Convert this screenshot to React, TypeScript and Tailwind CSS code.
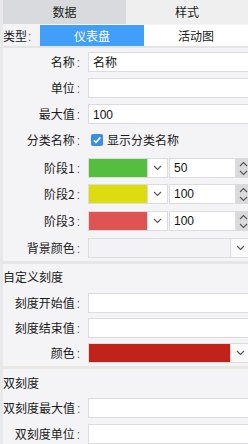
import React from "react";

const FONT = '"Noto Sans CJK SC", "Liberation Sans", sans-serif';
const NUM = '"Liberation Sans", "Noto Sans CJK SC", sans-serif';

function Chevron({ up = false }: { up?: boolean }) {
  return (
    <svg width="9" height="6" viewBox="0 0 9 6" className="block">
      <polyline
        points={up ? "1,5 4.5,1.5 8,5" : "1,1 4.5,4.5 8,1"}
        fill="none"
        stroke="#555"
        strokeWidth="1.1"
      />
    </svg>
  );
}

function Label({ text }: { text: string }) {
  return (
    <div className="w-[85px] shrink-0 text-right pr-[8px] whitespace-nowrap text-[12px] leading-[20px] text-[#1a1a1a]">
      {text}
      <span className="ml-[2px] text-[#5b4f7d]" style={{ fontFamily: NUM }}>:</span>
    </div>
  );
}

function TextRow({ label, value, mt }: { label: string; value?: string; mt: string }) {
  return (
    <div className={`flex h-[20px] ${mt}`}>
      <Label text={label} />
      <div className="w-[165px] shrink-0 h-[20px] bg-white border border-[#dcdcdf] pl-[4px] text-[12px] leading-[18px] text-[#111]">
        {value && <span style={{ fontFamily: value.match(/^\d/) ? NUM : FONT }}>{value}</span>}
      </div>
    </div>
  );
}

function StageRow({ label, color, value, mt }: { label: string; color: string; value: string; mt: string }) {
  return (
    <div className={`flex h-[20px] ${mt}`}>
      <Label text={label} />
      <div className="flex h-[20px] shrink-0 border border-[#dcdcdf] bg-white">
        <div className="w-[58px] h-full" style={{ backgroundColor: color }} />
        <div className="w-[20px] h-full bg-white border-l border-[#dcdcdf] flex items-center justify-center">
          <Chevron />
        </div>
      </div>
      <div className="ml-[1px] w-[67px] shrink-0 h-[20px] bg-white border border-[#dcdcdf] pl-[4px] text-[12px] leading-[18px] text-[#111]" style={{ fontFamily: NUM }}>
        {value}
      </div>
      <div className="w-[14px] shrink-0 h-[20px] bg-[#dadadc] flex flex-col items-center justify-center gap-[3px]">
        <Chevron up />
        <Chevron />
      </div>
    </div>
  );
}

function SelectRow({ label, fill, mt }: { label: string; fill?: string; mt: string }) {
  return (
    <div className={`flex h-[20px] ${mt}`}>
      <Label text={label} />
      <div className="flex h-[20px] w-[162px] shrink-0 border border-[#dcdcdf] bg-[#f3f3f5]">
        <div className="w-[141px] h-full" style={{ backgroundColor: fill ?? "#f3f3f5" }} />
        <div className="flex-1 h-full bg-[#fafafa] border-l border-[#dcdcdf] flex items-center justify-center">
          <Chevron />
        </div>
      </div>
    </div>
  );
}

export default function App() {
  return (
    <div
      className="w-[248px] h-[444px] overflow-hidden bg-[#f4f4f6] border-l-[3px] border-[#e8e8ea] flex flex-col text-[#1a1a1a]"
      style={{ fontFamily: FONT }}
    >
      <div className="flex h-[24px] shrink-0 text-[12px] leading-[24px]">
        <div className="w-[123px] bg-[#d9dadd] text-center">数据</div>
        <div className="flex-1 bg-[#efeff0] text-center">样式</div>
      </div>

      <div className="flex h-[21px] mt-[1px] shrink-0 text-[12px] leading-[21px]">
        <div className="w-[37px]">
          类型<span className="ml-[1px] text-[#5b4f7d]" style={{ fontFamily: NUM }}>:</span>
        </div>
        <div className="w-[104px] bg-[#419ef9] text-white text-center">仪表盘</div>
        <div className="flex-1 bg-white text-center">活动图</div>
      </div>
      <div className="h-[2px] bg-[#e4e4e6]" />

      <TextRow label="名称" value="名称" mt="mt-[4px]" />
      <TextRow label="单位" mt="mt-[6px]" />
      <TextRow label="最大值" value="100" mt="mt-[6px]" />

      <div className="flex h-[20px] mt-[6px] items-center">
        <Label text="分类名称" />
        <div className="ml-[3px] w-[12px] h-[12px] rounded-[2px] bg-[#3c8ee4] flex items-center justify-center">
          <svg width="10" height="10" viewBox="0 0 10 10">
            <polyline points="1.8,5.2 4,7.4 8.4,2.4" fill="none" stroke="white" strokeWidth="1.6" />
          </svg>
        </div>
        <span className="ml-[4px] text-[12px]">显示分类名称</span>
      </div>

      <StageRow label="阶段1" color="#55be3e" value="50" mt="mt-[8px]" />
      <StageRow label="阶段2" color="#dcdc0e" value="100" mt="mt-[6px]" />
      <StageRow label="阶段3" color="#e05353" value="100" mt="mt-[7px]" />

      <SelectRow label="背景颜色" mt="mt-[7px]" />

      <div className="h-[3px] mt-[3px] bg-[#e6e6e8]" />
      <div className="h-[22px] mt-[2px] text-[12px] leading-[22px] pl-[0px]">自定义刻度</div>

      <TextRow label="刻度开始值" mt="mt-[5px]" />
      <TextRow label="刻度结束值" mt="mt-[5px]" />
      <SelectRow label="颜色" fill="#c1231a" mt="mt-[5px]" />

      <div className="h-[3px] mt-[3px] bg-[#ebe8e2]" />
      <div className="h-[22px] mt-[3px] text-[12px] leading-[22px]">双刻度</div>

      <TextRow label="双刻度最大值" mt="mt-[4px]" />
      <TextRow label="双刻度单位" mt="mt-[6px]" />
    </div>
  );
}
